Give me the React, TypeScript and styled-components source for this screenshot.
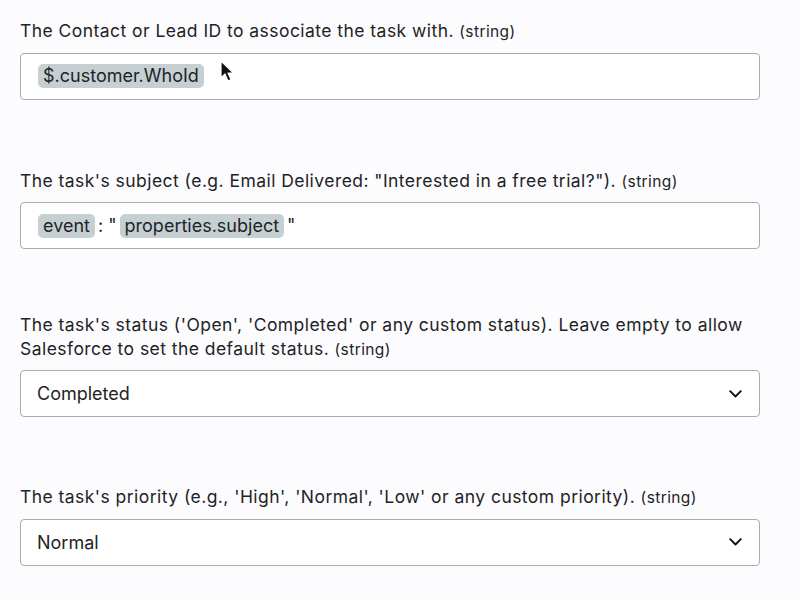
import React from "react";
import styled, { createGlobalStyle } from "styled-components";

const GlobalStyle = createGlobalStyle`
  html, body {
    margin: 0;
    padding: 0;
    background: #fcfbfd;
  }
  body {
    font-family: Inter, "Noto Sans", "Liberation Sans", sans-serif;
    color: #1e2326;
  }
`;

const Page = styled.div`
  display: flex;
  flex-direction: column;
  padding: 19px 40px 0 20px;
`;

const Field = styled.div<{ $space: number }>`
  display: flex;
  flex-direction: column;
  gap: 9px;
  margin-top: ${(p) => p.$space}px;
`;

const Label = styled.label`
  font-size: 17.5px;
  line-height: 23.5px;
  letter-spacing: 0.45px;
  color: #1e2326;
`;

const TypeHint = styled.span`
  font-size: 15.5px;
  letter-spacing: 0.4px;
  color: #1e2326;
`;

const InputBox = styled.div`
  position: relative;
  display: flex;
  align-items: center;
  height: 47px;
  box-sizing: border-box;
  padding: 0 17px;
  background: #ffffff;
  border: 1px solid #a4aeb0;
  border-radius: 4px;
  font-size: 18px;
  color: #1e2326;
  white-space: pre;
`;

const Chip = styled.span`
  display: inline-block;
  background: #c6d0d2;
  border-radius: 5px;
  padding: 1px 5px;
  line-height: 22px;
`;

const Plain = styled.span`
  padding: 0 3px;
`;

const SelectBox = styled(InputBox)`
  justify-content: space-between;
  padding-left: 16px;
  padding-right: 17px;
`;

const Cursor = styled.svg`
  position: absolute;
  left: 199px;
  top: 6px;
`;

function Chevron() {
  return (
    <svg width="13" height="8" viewBox="0 0 13 8">
      <path d="M1.2 1.2 L6.5 6.5 L11.8 1.2" fill="none" stroke="#111" strokeWidth="1.9" strokeLinecap="round" strokeLinejoin="round" />
    </svg>
  );
}

function Pointer() {
  return (
    <Cursor width="16" height="24" viewBox="0 0 16 24">
      <path d="M1 1 L1 18 L5 14 L8 21 L11 19.6 L8 13 L13.5 13 Z" fill="#111" stroke="#fff" strokeWidth="1.2" strokeLinejoin="round" />
    </Cursor>
  );
}

export default function App() {
  return (
    <>
      <GlobalStyle />
      <Page>
        <Field $space={0}>
          <Label>
            The Contact or Lead ID to associate the task with. <TypeHint>(string)</TypeHint>
          </Label>
          <InputBox>
            <Chip>$.customer.WhoId</Chip>
            <Pointer />
          </InputBox>
        </Field>

        <Field $space={69}>
          <Label>
            The task's subject (e.g. Email Delivered: "Interested in a free trial?"). <TypeHint>(string)</TypeHint>
          </Label>
          <InputBox>
            <Chip>event</Chip>
            <Plain>: "</Plain>
            <Chip>properties.subject</Chip>
            <Plain>"</Plain>
          </InputBox>
        </Field>

        <Field $space={64}>
          <Label>
            The task's status ('Open', 'Completed' or any custom status). Leave empty to allow Salesforce to set the default status. <TypeHint>(string)</TypeHint>
          </Label>
          <SelectBox>
            <span>Completed</span>
            <Chevron />
          </SelectBox>
        </Field>

        <Field $space={68}>
          <Label>
            The task's priority (e.g., 'High', 'Normal', 'Low' or any custom priority). <TypeHint>(string)</TypeHint>
          </Label>
          <SelectBox>
            <span>Normal</span>
            <Chevron />
          </SelectBox>
        </Field>
      </Page>
    </>
  );
}
